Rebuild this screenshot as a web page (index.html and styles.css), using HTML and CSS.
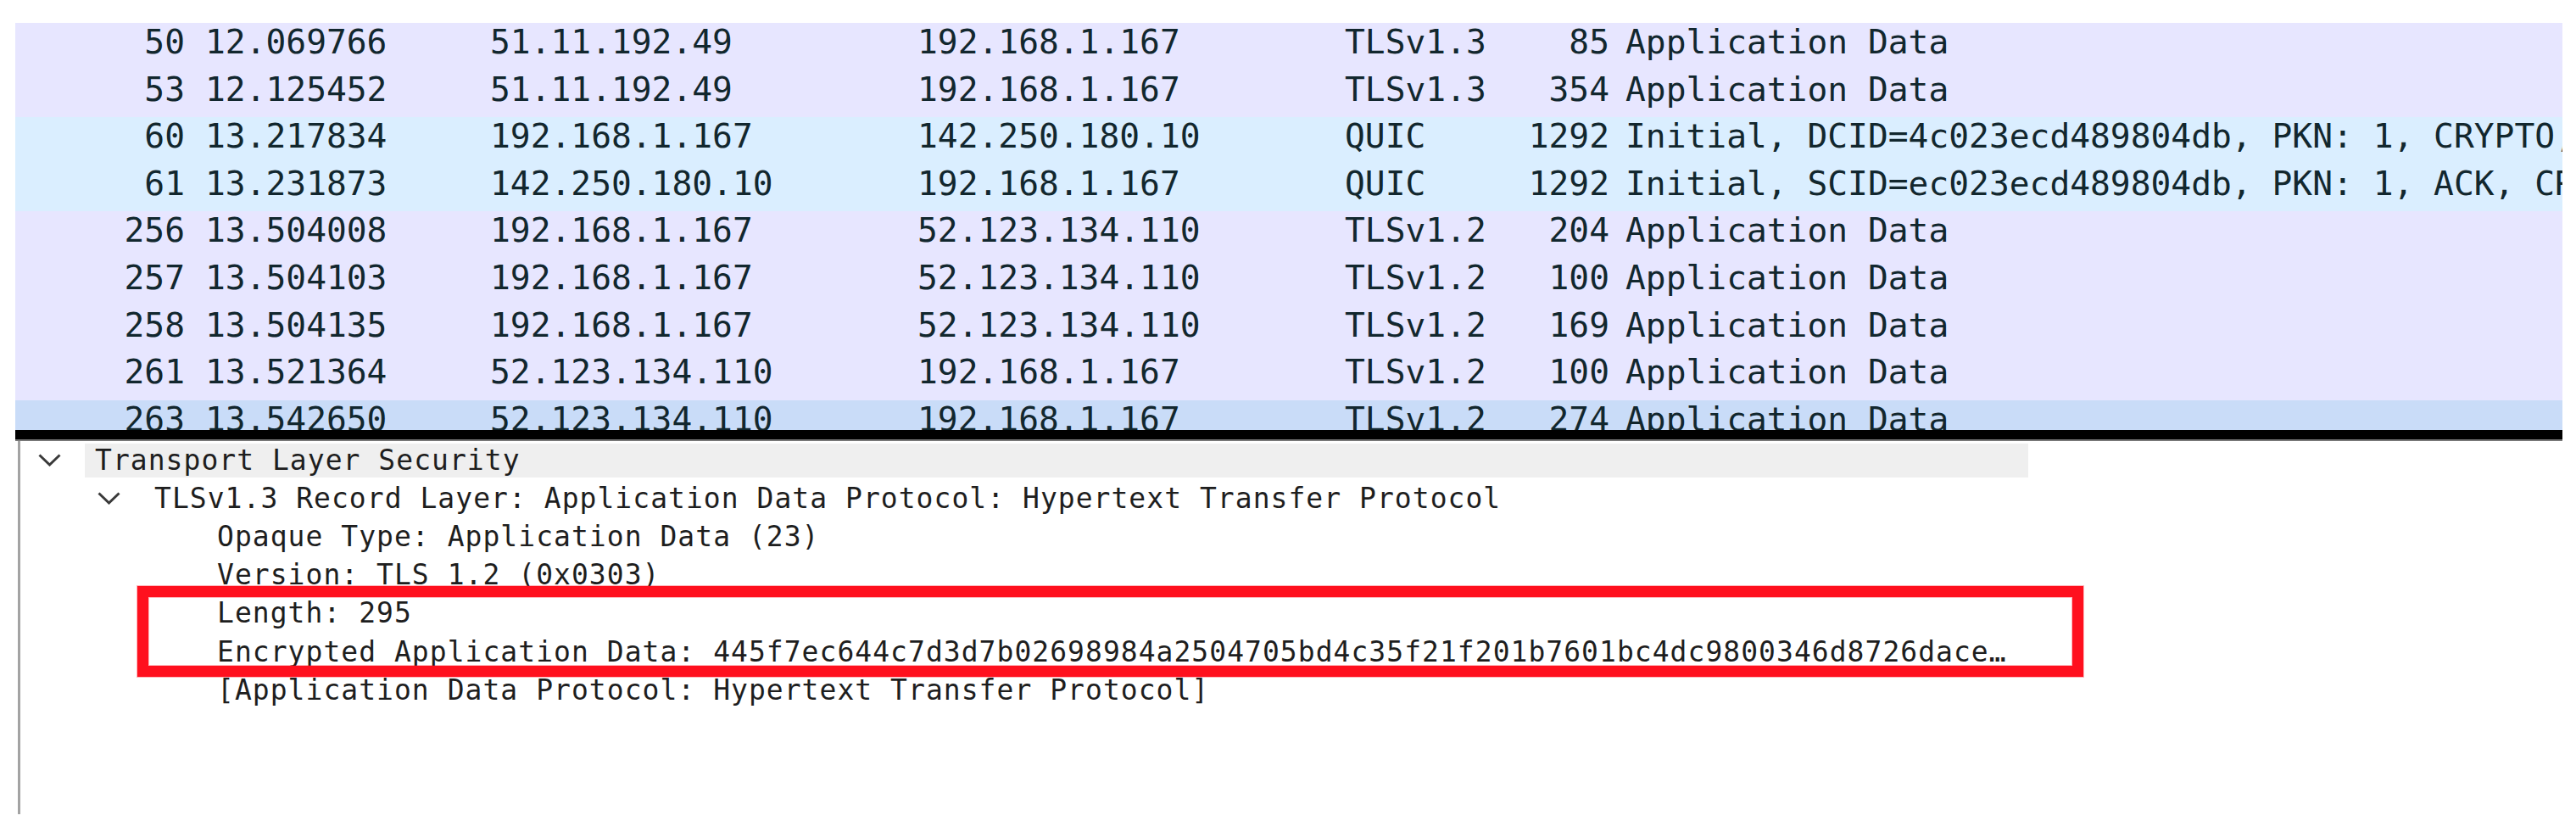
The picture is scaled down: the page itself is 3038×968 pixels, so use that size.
FILE: index.html
```html
<!DOCTYPE html>
<html lang="en">
<head>
<meta charset="utf-8">
<title>Wireshark capture</title>
<link rel="stylesheet" href="styles.css">
</head>
<body>
<div class="window">
  <div class="packets">
    <div class="row tcp"><span class="no">50</span><span>12.069766</span><span>51.11.192.49</span><span>192.168.1.167</span><span>TLSv1.3</span><span class="len">85</span><span class="info">Application Data</span></div>
    <div class="row tcp"><span class="no">53</span><span>12.125452</span><span>51.11.192.49</span><span>192.168.1.167</span><span>TLSv1.3</span><span class="len">354</span><span class="info">Application Data</span></div>
    <div class="row udp"><span class="no">60</span><span>13.217834</span><span>192.168.1.167</span><span>142.250.180.10</span><span>QUIC</span><span class="len">1292</span><span class="info">Initial, DCID=4c023ecd489804db, PKN: 1, CRYPTO, PADDING</span></div>
    <div class="row udp"><span class="no">61</span><span>13.231873</span><span>142.250.180.10</span><span>192.168.1.167</span><span>QUIC</span><span class="len">1292</span><span class="info">Initial, SCID=ec023ecd489804db, PKN: 1, ACK, CRYPTO, PADDING</span></div>
    <div class="row tcp"><span class="no">256</span><span>13.504008</span><span>192.168.1.167</span><span>52.123.134.110</span><span>TLSv1.2</span><span class="len">204</span><span class="info">Application Data</span></div>
    <div class="row tcp"><span class="no">257</span><span>13.504103</span><span>192.168.1.167</span><span>52.123.134.110</span><span>TLSv1.2</span><span class="len">100</span><span class="info">Application Data</span></div>
    <div class="row tcp"><span class="no">258</span><span>13.504135</span><span>192.168.1.167</span><span>52.123.134.110</span><span>TLSv1.2</span><span class="len">169</span><span class="info">Application Data</span></div>
    <div class="row tcp"><span class="no">261</span><span>13.521364</span><span>52.123.134.110</span><span>192.168.1.167</span><span>TLSv1.2</span><span class="len">100</span><span class="info">Application Data</span></div>
    <div class="row selected"><span class="no">263</span><span>13.542650</span><span>52.123.134.110</span><span>192.168.1.167</span><span>TLSv1.2</span><span class="len">274</span><span class="info">Application Data</span></div>
  </div>
  <div class="divider"></div>
  <div class="details">
    <div class="node l0">
      <span class="chev"><svg width="27" height="15" viewBox="0 0 27 15"><polyline points="1.5,1.5 13.5,13 25.5,1.5"/></svg></span>
      <span class="label">Transport Layer Security</span>
    </div>
    <div class="node l1">
      <span class="chev"><svg width="27" height="15" viewBox="0 0 27 15"><polyline points="1.5,1.5 13.5,13 25.5,1.5"/></svg></span>
      <span class="label">TLSv1.3 Record Layer: Application Data Protocol: Hypertext Transfer Protocol</span>
    </div>
    <div class="node l2"><span class="chev"></span><span class="label">Opaque Type: Application Data (23)</span></div>
    <div class="node l2"><span class="chev"></span><span class="label">Version: TLS 1.2 (0x0303)</span></div>
    <div class="node l2"><span class="chev"></span><span class="label">Length: 295</span></div>
    <div class="node l2"><span class="chev"></span><span class="label">Encrypted Application Data: 445f7ec644c7d3d7b02698984a2504705bd4c35f21f201b7601bc4dc9800346d8726dace…</span></div>
    <div class="node l2"><span class="chev"></span><span class="label">[Application Data Protocol: Hypertext Transfer Protocol]</span></div>
    <div class="mark"></div>
  </div>
</div>
</body>
</html>
```

FILE: styles.css
```css
html, body {
  margin: 0;
  background: #ffffff;
}

body {
  font-family: "DejaVu Sans Mono", "Liberation Mono", monospace;
}

.window {
  padding: 27px 16px 0 18px;
}

.packets {
  height: 480px;
  overflow: hidden;
}

.row {
  display: grid;
  grid-template-columns: 224px 336px 504px 504px 192px 120px minmax(0, 1fr);
  height: 55.6px;
  line-height: 44px;
  font-size: 39.6px;
  color: #12272e;
  white-space: nowrap;
  overflow: hidden;
}

.row.tcp {
  background: #e7e6ff;
}

.row.udp {
  background: #daeeff;
}

.row.selected {
  background: #c9dcf8;
}

.no {
  text-align: right;
  padding-right: 24px;
}

.len {
  text-align: right;
}

.info {
  padding-left: 19px;
  overflow: hidden;
}

.divider {
  height: 11px;
  background: #000000;
  border-bottom: 2px solid #777777;
}

.details {
  position: relative;
  margin-left: 3px;
  border-left: 3px solid #a3a3a3;
  height: 440px;
}

.node {
  display: flex;
  align-items: center;
  height: 45.2px;
  font-size: 33px;
  letter-spacing: 1.03px;
  color: #1e1e1e;
  white-space: nowrap;
}

.node.l0 {
  padding-left: 21px;
}

.node.l1 {
  padding-left: 91px;
}

.node.l2 {
  padding-left: 165px;
}

.chev {
  flex: none;
  width: 55px;
  display: flex;
  align-items: center;
}

.chev svg {
  display: block;
}

.chev polyline {
  fill: none;
  stroke: #3a3a3a;
  stroke-width: 3;
}

.label {
  height: 40px;
  line-height: 40px;
  padding-left: 12px;
}

.l0 .label {
  box-sizing: border-box;
  width: 2292px;
  background: #efefef;
}

.mark {
  position: absolute;
  left: 138px;
  top: 171px;
  width: 2295px;
  height: 107px;
  box-sizing: border-box;
  border: 13px solid #ff101e;
  box-shadow: 0 0 0 1px rgba(255, 16, 30, 0.3), inset 0 0 0 1px rgba(255, 16, 30, 0.3);
}
```
